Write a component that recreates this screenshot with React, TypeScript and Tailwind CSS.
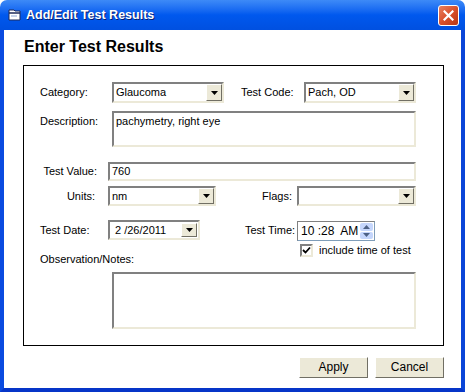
import React from "react";

const sunken =
  "border-2 border-t-[#808080] border-l-[#808080] border-b-[#ece9d8] border-r-[#ece9d8] bg-white";

function DropBtn() {
  return (
    <div className="w-[16px] h-full bg-[#ece9d8] border border-t-white border-l-white border-r-[#716f64] border-b-[#716f64] flex items-center justify-center shrink-0">
      <svg width="7" height="4" viewBox="0 0 7 4">
        <path d="M0 0h7L3.5 4z" fill="#000" />
      </svg>
    </div>
  );
}

function Combo({ w, h = "h-[21px]", value }: { w: string; h?: string; value: string }) {
  return (
    <div className={`${w} ${h} ${sunken} flex items-stretch`}>
      <div className="flex-1 flex items-center pl-[2px] overflow-hidden whitespace-nowrap">{value}</div>
      <DropBtn />
    </div>
  );
}

export default function App() {
  return (
    <div className="w-[465px] h-[392px] flex flex-col bg-white font-['Liberation_Sans',Arial,sans-serif] text-[11px] leading-[13px] text-black">
      {/* Title bar */}
      <div className="h-[30px] shrink-0 rounded-t-[7px] bg-gradient-to-b from-[#3d8af7] via-[#0058ee] to-[#0050e0] flex items-center pl-[8px] pr-[6px]">
        <svg width="13" height="12" viewBox="0 0 13 12" className="shrink-0">
          <path d="M1 1h5l1 1h5v9H1z" fill="#fff" stroke="#1e2a5a" strokeWidth="1" />
          <path d="M1 4h11" stroke="#1e2a5a" strokeWidth="1.5" />
          <path d="M3 7h6" stroke="#8fa8d8" strokeWidth="1" />
        </svg>
        <span className="ml-[5px] text-white font-bold text-[12.5px] leading-[16px] [text-shadow:1px_1px_0_#0a1e6e]">
          Add/Edit Test Results
        </span>
        <div className="ml-auto w-[21px] h-[21px] rounded-[3px] border border-white bg-gradient-to-br from-[#e8805f] via-[#d9502b] to-[#b83612] flex items-center justify-center">
          <svg width="11" height="11" viewBox="0 0 11 11">
            <path d="M1.5 1.5l8 8M9.5 1.5l-8 8" stroke="#fff" strokeWidth="2.2" strokeLinecap="square" />
          </svg>
        </div>
      </div>

      {/* Body with frame */}
      <div className="flex-1 flex flex-col border-l-4 border-r-4 border-b-4 border-l-[#0a4be0] border-r-[#0a45d8] border-b-[#0635c8] bg-white">
        <div className="ml-[20px] mt-[7px] text-[16px] leading-[19px] font-bold">Enter Test Results</div>

        <div className="ml-[19px] mt-[9px] w-[421px] h-[281px] border border-black flex flex-col pl-[16px]">
          {/* Row 1 */}
          <div className="flex items-center mt-[16px]">
            <div className="w-[72px]">Category:</div>
            <Combo w="w-[112px]" value="Glaucoma" />
            <div className="ml-[17px] w-[63px]">Test Code:</div>
            <Combo w="w-[112px]" value="Pach, OD" />
          </div>

          {/* Description */}
          <div className="flex items-start mt-[8px]">
            <div className="w-[72px] pt-[4px]">Description:</div>
            <div className={`w-[304px] h-[36px] ${sunken} pl-[2px] pt-[2px]`}>pachymetry, right eye</div>
          </div>

          {/* Test value */}
          <div className="flex items-center mt-[15px]">
            <div className="w-[57px] text-right">Test Value:</div>
            <div className={`ml-[11px] w-[308px] h-[19px] ${sunken} pl-[2px] flex items-center`}>760</div>
          </div>

          {/* Units / Flags */}
          <div className="flex items-center mt-[5px]">
            <div className="w-[55px] text-right">Units:</div>
            <div className="ml-[13px]">
              <Combo w="w-[108px]" h="h-[20px]" value="nm" />
            </div>
            <div className="ml-[46px] w-[35px]">Flags:</div>
            <Combo w="w-[119px]" h="h-[20px]" value="" />
          </div>

          {/* Date / Time */}
          <div className="flex items-center mt-[13px]">
            <div className="w-[68px]">Test Date:</div>
            <div className={`w-[92px] h-[20px] ${sunken} flex items-stretch py-[1px] pr-[1px]`}>
              <div className="flex-1 flex items-center pl-[5px]">2 /26/2011</div>
              <DropBtn />
            </div>
            <div className="ml-[45px] w-[52px]">Test Time:</div>
            <div className={`w-[78px] h-[20px] border border-[#7f9db9] border-l-[#808080] border-t-[#808080] bg-white flex items-stretch mt-[2px]`}>
              <div className="flex-1 flex items-center pl-[3px] text-[12px]">10 :28&nbsp; AM</div>
              <div className="w-[15px] flex flex-col p-[1px] gap-[1px]">
                <div className="flex-1 rounded-[2px] bg-[#c5d6fc] flex items-center justify-center">
                  <svg width="7" height="4" viewBox="0 0 7 4"><path d="M0 4L3.5 0 7 4z" fill="#4d6185" /></svg>
                </div>
                <div className="flex-1 rounded-[2px] bg-[#c5d6fc] flex items-center justify-center">
                  <svg width="7" height="4" viewBox="0 0 7 4"><path d="M0 0h7L3.5 4z" fill="#4d6185" /></svg>
                </div>
              </div>
            </div>
          </div>

          {/* checkbox */}
          <div className="flex items-center mt-[3px] ml-[260px]">
            <div className="w-[13px] h-[13px] border-2 border-t-[#808080] border-l-[#808080] border-b-[#ece9d8] border-r-[#ece9d8] bg-white flex items-center justify-center">
              <svg width="9" height="9" viewBox="0 0 9 9">
                <path d="M1 4l2.5 2.5L8 1.5" stroke="#000" strokeWidth="1.8" fill="none" />
              </svg>
            </div>
            <div className="ml-[6px]">include time of test</div>
          </div>

          {/* Observation */}
          <div className="-mt-[4px]">Observation/Notes:</div>
          <div className={`ml-[72px] mt-[6px] w-[304px] h-[57px] ${sunken}`}></div>
        </div>

        {/* Buttons */}
        <div className="flex justify-end gap-[7px] mt-[11px] mr-[17px]">
          <div className="w-[69px] h-[21px] bg-[#ece9d8] border border-t-white border-l-white border-r-[#716f64] border-b-[#716f64] flex items-center justify-center text-[12px]">
            Apply
          </div>
          <div className="w-[69px] h-[21px] bg-[#ece9d8] border border-t-white border-l-white border-r-[#716f64] border-b-[#716f64] flex items-center justify-center text-[12px]">
            Cancel
          </div>
        </div>
      </div>
    </div>
  );
}
